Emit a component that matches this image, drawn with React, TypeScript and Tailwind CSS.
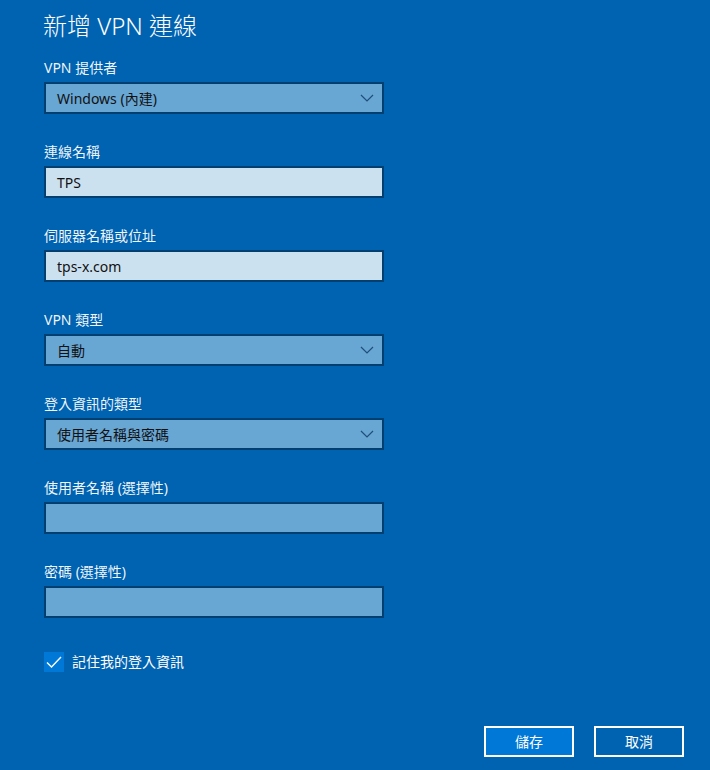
import { ReactNode } from 'react';

const font = { fontFamily: '"Noto Sans", "Noto Sans CJK TC", sans-serif' };

function Chevron() {
  return (
    <svg width="14" height="8" viewBox="0 0 14 8" className="text-[#1f4f77]">
      <path d="M1 1l6 6 6-6" fill="none" stroke="currentColor" strokeWidth="1.2" />
    </svg>
  );
}

function Field({ label, children }: { label: string; children: ReactNode }) {
  return (
    <div className="flex flex-col">
      <div className="h-5 text-[14px] leading-5 text-white/95">{label}</div>
      <div className="mt-1">{children}</div>
    </div>
  );
}

function Select({ value }: { value: string }) {
  return (
    <div className="flex h-8 w-[340px] items-center justify-between border-2 border-[#003f6f] bg-[#68a6d4] pl-[11px] pr-[8px] text-[14px] text-[#111]">
      <span>{value}</span>
      <Chevron />
    </div>
  );
}

function TextBox({ value, filled }: { value?: string; filled?: boolean }) {
  return (
    <div
      className={
        'flex h-8 w-[340px] items-center border-2 border-[#003f6f] pl-[11px] text-[14px] text-[#111] ' +
        (filled ? 'bg-[#cce1f0]' : 'bg-[#68a6d4]')
      }
    >
      {value}
    </div>
  );
}

export default function App() {
  return (
    <div className="flex h-[770px] w-[710px] flex-col bg-[#0063b1] text-white" style={font}>
      <div className="pl-[43px] pt-[10px]">
        <h1 className="h-8 text-[24px] leading-8 font-light">新增 VPN 連線</h1>
      </div>

      <div className="mt-4 flex flex-col gap-7 pl-[44px]">
        <Field label="VPN 提供者">
          <Select value="Windows (內建)" />
        </Field>
        <Field label="連線名稱">
          <TextBox value="TPS" filled />
        </Field>
        <Field label="伺服器名稱或位址">
          <TextBox value="tps-x.com" filled />
        </Field>
        <Field label="VPN 類型">
          <Select value="自動" />
        </Field>
        <Field label="登入資訊的類型">
          <Select value="使用者名稱與密碼" />
        </Field>
        <Field label="使用者名稱 (選擇性)">
          <TextBox />
        </Field>
        <Field label="密碼 (選擇性)">
          <TextBox />
        </Field>
      </div>

      <div className="mt-[34px] flex items-center gap-2 pl-[44px]">
        <div className="flex h-5 w-5 items-center justify-center bg-[#0078d7]">
          <svg width="16" height="12" viewBox="0 0 16 12">
            <path d="M1 6.5l4.5 4.5L15 1" fill="none" stroke="white" strokeWidth="1.4" />
          </svg>
        </div>
        <span className="text-[14px] leading-5">記住我的登入資訊</span>
      </div>

      <div className="mt-[54px] flex justify-end gap-5 pr-[26px]">
        <button className="h-[31px] w-[90px] border-2 border-white bg-[#0078d7] text-[14px] text-white">
          儲存
        </button>
        <button className="h-[31px] w-[90px] border-2 border-white bg-transparent text-[14px] text-white">
          取消
        </button>
      </div>
    </div>
  );
}
